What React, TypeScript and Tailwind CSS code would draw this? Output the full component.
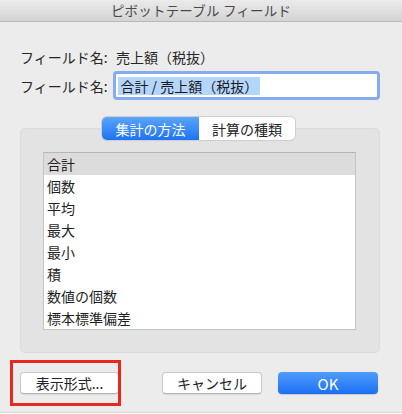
import React from "react";

const font = { fontFamily: '"Noto Sans CJK JP", "Noto Sans", sans-serif' };

const items = ["合計", "個数", "平均", "最大", "最小", "積", "数値の個数", "標本標準偏差"];

function MacButton({ children, className = "" }: { children: React.ReactNode; className?: string }) {
  return (
    <div
      className={
        "h-[22px] flex items-center justify-center rounded-[4px] bg-white border border-[#c9c9c9] border-b-[#b3b3b3] shadow-[0_1px_1px_rgba(0,0,0,0.08)] text-[14px] leading-none text-[#222] " +
        className
      }
    >
      {children}
    </div>
  );
}

export default function App() {
  return (
    <div style={font} className="w-[402px] h-[414px] bg-[#ececec] flex flex-col overflow-hidden relative">
      {/* title bar */}
      <div className="h-[22px] shrink-0 flex items-center justify-center bg-gradient-to-b from-[#ebebeb] to-[#d3d3d3] border-b border-[#b9b9b9]">
        <span className="text-[13.5px] leading-none text-[#4a4a4a] tracking-[0.2px]">ピボットテーブル フィールド</span>
      </div>

      <div className="flex-1 flex flex-col pl-[20px] pr-[22px]">
        <div className="mt-[25px] h-[20px] flex items-center text-[14px] leading-none text-[#262626]">
          <span className="w-[96px]">フィールド名:</span>
          <span>売上額（税抜）</span>
        </div>

        <div className="mt-[4px] flex items-center text-[14px] leading-none text-[#262626]">
          <span className="w-[94px]">フィールド名:</span>
          <div className="h-[29px] w-[268px] rounded-[4px] border-[3px] border-[#84adf0] bg-white flex items-center pl-[2px]">
            <span className="bg-[#b4d6fd] h-[18px] flex items-center px-[2px] text-[#1a1a1a]">合計 / 売上額（税抜）</span>
          </div>
        </div>

        {/* segmented control over group box */}
        <div className="mt-[17px] relative z-10 -mb-[12px] flex justify-center pr-[3px]">
          <div className="flex h-[23px] rounded-[5px] overflow-hidden shadow-[0_0_0_1px_#cfcfcf,0_1px_1px_rgba(0,0,0,0.12)] text-[14px] leading-none">
            <div className="w-[97px] flex items-center justify-center text-white bg-gradient-to-b from-[#5aa4fb] to-[#1c72f5]">
              集計の方法
            </div>
            <div className="w-[96px] flex items-center justify-center bg-white text-[#222]">計算の種類</div>
          </div>
        </div>

        <div className="h-[225px] rounded-[5px] bg-[#e3e3e3] border border-[#dbdbdb] pt-[23px] pl-[22px] pr-[23px]">
          <div className="h-[178px] bg-white border border-[#c4c4c4] border-t-[#b5b5b5] flex flex-col">
            {items.map((it, i) => (
              <div
                key={it}
                className={
                  "h-[22px] shrink-0 flex items-center pl-[3px] text-[14px] leading-none text-[#1f1f1f] " +
                  (i === 0 ? "bg-[#dcdcdc]" : "")
                }
              >
                {it}
              </div>
            ))}
          </div>
        </div>

        <div className="mt-[19px] flex items-center justify-between pr-[2px]">
          <MacButton className="w-[99px]">表示形式...</MacButton>
          <div className="flex gap-[16px]">
            <MacButton className="w-[100px]">キャンセル</MacButton>
            <div className="w-[100px] h-[22px] rounded-[4px] flex items-center justify-center text-white text-[15px] leading-none bg-gradient-to-b from-[#4f9cfb] to-[#1b6ff4] shadow-[0_1px_1px_rgba(0,0,0,0.15)]">
              OK
            </div>
          </div>
        </div>
      </div>

      <div className="h-[2px] bg-white border-t border-[#d6d6d6] shrink-0" />

      {/* annotation highlight */}
      <div className="absolute left-[10px] top-[360px] w-[111px] h-[46px] border-[3px] border-[#e8281c] pointer-events-none" />
    </div>
  );
}
